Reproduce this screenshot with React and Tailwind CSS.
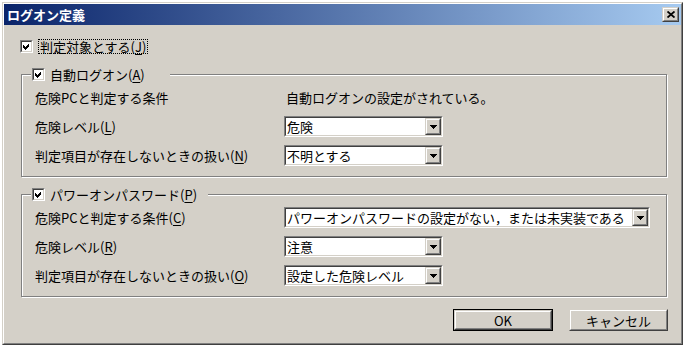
const FONT = "font-['Noto_Sans_CJK_JP','Noto_Sans',sans-serif]";

const Sunken = ({ className = "", children }) => (
  <div className={`border border-t-[#808080] border-l-[#808080] border-r-white border-b-white ${className}`}>
    <div className="w-full h-full border border-t-[#404040] border-l-[#404040] border-r-[#d4d0c8] border-b-[#d4d0c8] bg-white flex items-center">
      {children}
    </div>
  </div>
);

const Raised = ({ className = "", children }) => (
  <div className={`border border-t-[#d4d0c8] border-l-[#d4d0c8] border-r-[#404040] border-b-[#404040] bg-[#d4d0c8] ${className}`}>
    <div className="w-full h-full border border-t-white border-l-white border-r-[#808080] border-b-[#808080] flex items-center justify-center">
      {children}
    </div>
  </div>
);

const Checkbox = () => (
  <Sunken className="w-[13px] h-[13px] shrink-0">
    <svg width="9" height="9" viewBox="0 0 9 9" shapeRendering="crispEdges">
      <polygon points="1,3 3,5 7,1 7,4 3,8 1,6" fill="#000" />
    </svg>
  </Sunken>
);

const Mn = ({ children }) => <span className="underline underline-offset-[2px]">{children}</span>;

const Select = ({ value, width }) => (
  <Sunken className={`${width} h-[21px]`}>
    <div className="flex-1 pl-[1px] leading-[15px] whitespace-nowrap">{value}</div>
    <Raised className="w-[16px] h-[17px] shrink-0">
      <svg width="7" height="4" viewBox="0 0 7 4" shapeRendering="crispEdges">
        <polygon points="0,0 7,0 3.5,4" fill="#000" />
      </svg>
    </Raised>
  </Sunken>
);

const Row = ({ label, children }) => (
  <div className="flex items-center h-[21px]">
    <div className="w-[249px] leading-[15px] whitespace-nowrap">{label}</div>
    {children}
  </div>
);

const Group = ({ legend, legendWidth, className = "", children }) => (
  <div
    className={`relative ml-[17px] w-[646px] border border-[#808080] shadow-[inset_1px_1px_0_#fff,1px_1px_0_#fff] pt-[12px] pb-[10px] pl-[13px] ${className}`}
  >
    <div className={`absolute top-[-7px] left-[9px] ${legendWidth} h-[13px] bg-[#d4d0c8] pl-[1px] flex items-center gap-[5px]`}>
      <Checkbox />
      <span className="leading-[15px] whitespace-nowrap">{legend}</span>
    </div>
    <div className="flex flex-col gap-[8px]">{children}</div>
  </div>
);

export default function App() {
  return (
    <div className={`w-[685px] h-[348px] bg-white pt-[2px] pl-[2px] text-[13px] text-black ${FONT}`}>
      <div className="w-[681px] h-[343px] border border-t-[#d4d0c8] border-l-[#d4d0c8] border-r-[#404040] border-b-[#404040] bg-[#d4d0c8]">
        <div className="w-full h-full border border-t-white border-l-white border-r-[#808080] border-b-[#808080] flex flex-col">
          <div className="h-[21px] shrink-0 bg-linear-to-r/srgb from-[#0a246a] to-[#a6caf0] flex items-center justify-between pl-[3px] pr-[2px]">
            <span className="text-white font-bold leading-[15px]">ログオン定義</span>
            <Raised className="w-[17px] h-[15px]">
              <svg width="8" height="7" viewBox="0 0 8 7">
                <path d="M0.5 0.5 L7.5 6.5 M7.5 0.5 L0.5 6.5" stroke="#000" strokeWidth="1.8" />
              </svg>
            </Raised>
          </div>

          <div className="flex items-center h-[15px] mt-[14px] ml-[16px] gap-[5px]">
            <Checkbox />
            <span className="leading-[13px] border border-dotted border-black px-[1px] whitespace-nowrap">
              判定対象とする(<Mn>J</Mn>)
            </span>
          </div>

          <Group
            className="mt-[20px]"
            legendWidth="w-[139px]"
            legend={<>自動ログオン(<Mn>A</Mn>)</>}
          >
            <Row label="危険PCと判定する条件">
              <div className="pl-[2px] leading-[15px] whitespace-nowrap">自動ログオンの設定がされている。</div>
            </Row>
            <Row label={<>危険レベル(<Mn>L</Mn>)</>}>
              <Select value="危険" width="w-[159px]" />
            </Row>
            <Row label={<>判定項目が存在しないときの扱い(<Mn>N</Mn>)</>}>
              <Select value="不明とする" width="w-[159px]" />
            </Row>
          </Group>

          <Group
            className="mt-[17px]"
            legendWidth="w-[177px]"
            legend={<>パワーオンパスワード(<Mn>P</Mn>)</>}
          >
            <Row label={<>危険PCと判定する条件(<Mn>C</Mn>)</>}>
              <Select value="パワーオンパスワードの設定がない，または未実装である" width="w-[366px]" />
            </Row>
            <Row label={<>危険レベル(<Mn>R</Mn>)</>}>
              <Select value="注意" width="w-[159px]" />
            </Row>
            <Row label={<>判定項目が存在しないときの扱い(<Mn>O</Mn>)</>}>
              <Select value="設定した危険レベル" width="w-[159px]" />
            </Row>
          </Group>

          <div className="ml-[17px] w-[647px] mt-[12px] flex justify-end gap-[16px]">
            <div className="w-[100px] h-[22px] border border-black">
              <Raised className="w-full h-full">
                <span className="leading-[15px]">OK</span>
              </Raised>
            </div>
            <Raised className="w-[99px] h-[22px]">
              <span className="leading-[15px]">キャンセル</span>
            </Raised>
          </div>
        </div>
      </div>
    </div>
  );
}
